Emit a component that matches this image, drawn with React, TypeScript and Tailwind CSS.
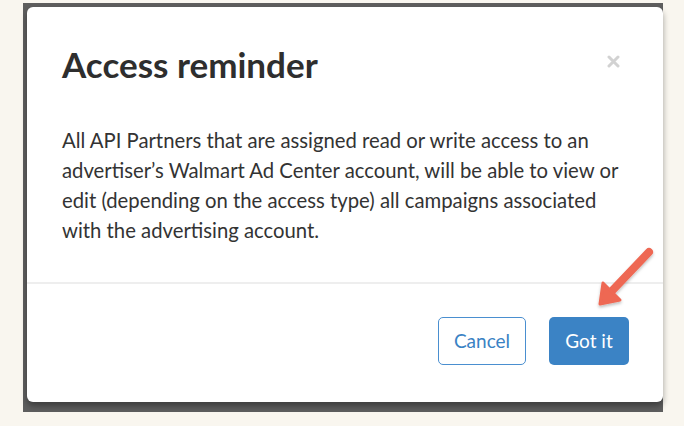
import React from "react";

export default function App() {
  return (
    <div className="w-[684px] h-[426px] bg-[#f9f6ef] pl-[23px] pt-[3px] overflow-hidden" style={{ fontFamily: "Lato, 'Open Sans', sans-serif" }}>
      <div className="relative w-[640px] h-[409px] bg-[#5e5e5e] pl-[4px] pt-[4px]">
        <div className="relative w-[636px] h-[395px] bg-white rounded-[6px] shadow-[0_4px_6px_rgba(0,0,0,0.35)] flex flex-col">
          <div className="flex items-start justify-between pl-[35px] pr-[43px] pt-[37px]">
            <h1 className="text-[35px] leading-[40px] font-bold text-[#2e2e2e]">Access reminder</h1>
            <svg className="mt-[11px]" width="13" height="13" viewBox="0 0 13 13">
              <path d="M2 2 L11 11 M11 2 L2 11" stroke="#d2d2d2" strokeWidth="3" strokeLinecap="round" />
            </svg>
          </div>
          <p className="pl-[35px] pr-[40px] mt-[41px] text-[20.3px] leading-[30px] text-[#333333]">
            All API Partners that are assigned read or write access to an advertiser’s Walmart Ad Center account, will be able to view or edit (depending on the access type) all campaigns associated with the advertising account.
          </p>
          <div className="mt-[37px] border-t-2 border-[#eeeeee]" />
          <div className="flex justify-end gap-[23px] pr-[34px] pt-[33px]">
            <button className="w-[88px] h-[48px] rounded-[5px] border-[1.5px] border-[#4a8fd0] text-[#3a82c4] text-[19px] bg-white">Cancel</button>
            <button className="w-[80px] h-[48px] rounded-[5px] bg-[#3b83c5] text-white text-[19px]">Got it</button>
          </div>
          <svg className="absolute left-[560px] top-[230px]" width="70" height="80" viewBox="0 0 70 80">
            <defs>
              <filter id="sh" x="-30%" y="-30%" width="160%" height="160%">
                <feDropShadow dx="0" dy="2" stdDeviation="1.5" floodColor="#000" floodOpacity="0.25" />
              </filter>
            </defs>
            <g filter="url(#sh)" fill="#ee6753" stroke="#ee6753" strokeLinecap="round" strokeLinejoin="round">
              <line x1="62" y1="15" x2="22" y2="57" strokeWidth="8" fill="none" />
              <polygon points="13,67 16,46 33,63" strokeWidth="3" />
            </g>
          </svg>
        </div>
      </div>
    </div>
  );
}
